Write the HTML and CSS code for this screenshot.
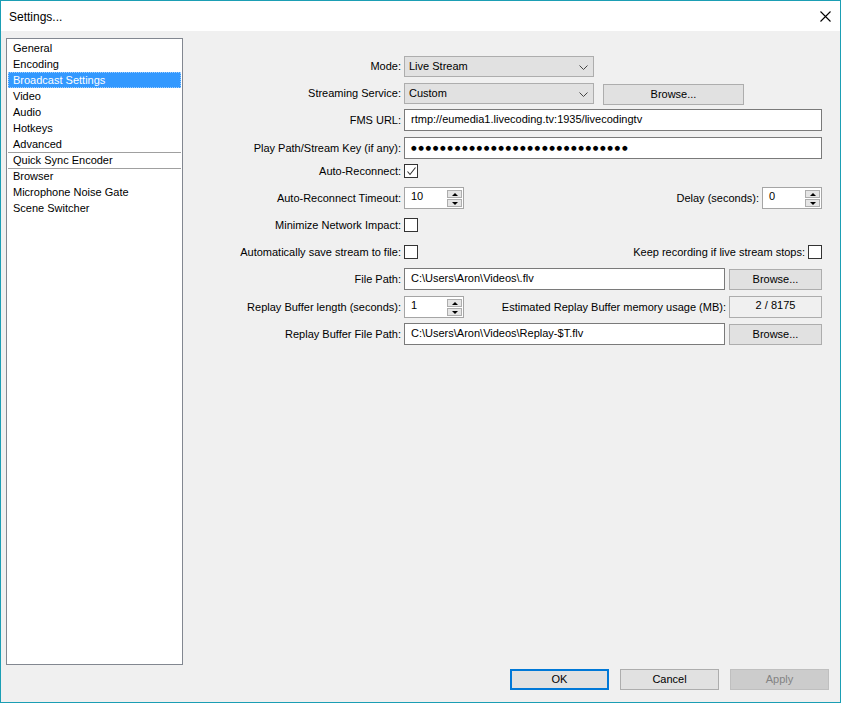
FILE: index.html
```html
<!DOCTYPE html>
<html lang="en">
<head>
  <meta charset="UTF-8">
  <title>Settings...</title>
  <link rel="stylesheet" href="styles.css">
</head>
<body>
  <div class="window">
    <div class="titlebar">
      <span class="title">Settings...</span>
      <span class="close">
        <svg width="11" height="11" viewBox="0 0 11 11"><path d="M0.5 0.5 L10.5 10.5 M10.5 0.5 L0.5 10.5" stroke="#000" stroke-width="1.1" fill="none"/></svg>
      </span>
    </div>

    <div class="main">
      <ul class="nav">
        <li>General</li>
        <li>Encoding</li>
        <li class="selected">Broadcast Settings</li>
        <li>Video</li>
        <li>Audio</li>
        <li>Hotkeys</li>
        <li>Advanced</li>
        <li class="sep">Quick Sync Encoder</li>
        <li class="sep">Browser</li>
        <li>Microphone Noise Gate</li>
        <li>Scene Switcher</li>
      </ul>

      <div class="form">
        <div class="row">
          <label>Mode:</label>
          <div class="combo">Live Stream<svg class="chev" width="9" height="5" viewBox="0 0 9 5"><polyline points="0.5,0.5 4.5,4.5 8.5,0.5" fill="none" stroke="#444" stroke-width="1"/></svg></div>
        </div>
        <div class="row">
          <label>Streaming Service:</label>
          <div class="combo">Custom<svg class="chev" width="9" height="5" viewBox="0 0 9 5"><polyline points="0.5,0.5 4.5,4.5 8.5,0.5" fill="none" stroke="#444" stroke-width="1"/></svg></div>
          <div class="button wide">Browse...</div>
        </div>
        <div class="row">
          <label>FMS URL:</label>
          <div class="field">rtmp://eumedia1.livecoding.tv:1935/livecodingtv</div>
        </div>
        <div class="row row-key">
          <label>Play Path/Stream Key (if any):</label>
          <div class="field dots">●●●●●●●●●●●●●●●●●●●●●●●●●●●●●●</div>
        </div>
        <div class="row row-tight">
          <label>Auto-Reconnect:</label>
          <div class="check checked">
            <svg width="11" height="11" viewBox="0 0 11 11"><polyline points="1.5,5.5 4,8.5 9.5,1.5" fill="none" stroke="#333" stroke-width="1.1"/></svg>
          </div>
        </div>
        <div class="row">
          <label>Auto-Reconnect Timeout:</label>
          <div class="spin"><span class="value">10</span><span class="arrows"><span class="up"></span><span class="down"></span></span></div>
          <span class="spacer"></span>
          <span class="side-label">Delay (seconds):</span>
          <div class="spin"><span class="value">0</span><span class="arrows"><span class="up"></span><span class="down"></span></span></div>
        </div>
        <div class="row">
          <label>Minimize Network Impact:</label>
          <div class="check"></div>
        </div>
        <div class="row">
          <label>Automatically save stream to file:</label>
          <div class="check"></div>
          <span class="spacer"></span>
          <span class="side-label">Keep recording if live stream stops:</span>
          <div class="check"></div>
        </div>
        <div class="row">
          <label>File Path:</label>
          <div class="field">C:\Users\Aron\Videos\.flv</div>
          <div class="button">Browse...</div>
        </div>
        <div class="row row-buffer">
          <label>Replay Buffer length (seconds):</label>
          <div class="spin"><span class="value">1</span><span class="arrows"><span class="up"></span><span class="down"></span></span></div>
          <span class="spacer"></span>
          <span class="side-label">Estimated Replay Buffer memory usage (MB):</span>
          <div class="readout">2 / 8175</div>
        </div>
        <div class="row">
          <label>Replay Buffer File Path:</label>
          <div class="field">C:\Users\Aron\Videos\Replay-$T.flv</div>
          <div class="button">Browse...</div>
        </div>
      </div>
    </div>

    <div class="footer">
      <div class="button action default">OK</div>
      <div class="button action">Cancel</div>
      <div class="button action disabled">Apply</div>
    </div>
  </div>
</body>
</html>
```

FILE: styles.css
```css
body {
  margin: 0;
  background: #f0f0f0;
}

.window {
  width: 841px;
  height: 703px;
  box-sizing: border-box;
  border: 1px solid #1b9eb4;
  background: #f0f0f0;
  display: flex;
  flex-direction: column;
  font-family: "Liberation Sans", Arial, sans-serif;
  font-size: 11px;
  color: #000;
}

.titlebar {
  height: 30px;
  flex: 0 0 30px;
  background: #fff;
  display: flex;
  align-items: center;
  justify-content: space-between;
  padding-left: 8px;
}

.title {
  font-size: 12px;
  padding-top: 2px;
}

.close {
  width: 30px;
  height: 30px;
  display: flex;
  align-items: center;
  justify-content: center;
}

.main {
  flex: 1;
  display: flex;
  padding: 7px 0 0 5px;
}

/* left category list */
.nav {
  list-style: none;
  margin: 0;
  padding: 1px;
  width: 177px;
  height: 627px;
  box-sizing: border-box;
  border: 1px solid #828790;
  background: #fff;
}

.nav li {
  height: 16px;
  line-height: 16px;
  padding-left: 5px;
  box-sizing: border-box;
  white-space: nowrap;
}

.nav li.sep {
  border-top: 1px solid #a0a0a0;
  line-height: 15px;
}

.nav li.selected {
  background: #3399ff;
  color: #fff;
  outline: 1px dotted #9fcfff;
  outline-offset: -1px;
}

/* right form */
.form {
  margin-left: 7px;
  padding-top: 17px;
  width: 632px;
  display: flex;
  flex-direction: column;
  gap: 5px;
}

.row {
  display: flex;
  align-items: center;
  height: 22px;
}

.row-key {
  margin-top: 1px;
}

.row-tight {
  margin-top: -4px;
}

.row-buffer {
  margin-top: 1px;
}

.row label {
  width: 211px;
  flex: 0 0 211px;
  text-align: right;
  margin-right: 3px;
  white-space: nowrap;
}

.spacer {
  flex: 1;
}

.side-label {
  margin-right: 3px;
  white-space: nowrap;
}

.combo {
  position: relative;
  width: 190px;
  height: 21px;
  box-sizing: border-box;
  border: 1px solid #adadad;
  background: #e1e1e1;
  padding-left: 4px;
  line-height: 19px;
}

.chev {
  position: absolute;
  right: 5px;
  top: 8px;
}

.button {
  height: 21px;
  box-sizing: border-box;
  border: 1px solid #adadad;
  background: #e1e1e1;
  text-align: center;
  line-height: 19px;
  width: 93px;
  margin-left: 4px;
}

.button.wide {
  width: 141px;
  margin-left: 9px;
  margin-top: 2px;
}

.field {
  flex: 1;
  height: 22px;
  box-sizing: border-box;
  border: 1px solid #7a7a7a;
  background: #fff;
  padding-left: 6px;
  line-height: 19px;
  white-space: nowrap;
  overflow: hidden;
}

.field.dots {
  font-family: "DejaVu Sans", sans-serif;
  font-size: 6.5px;
  letter-spacing: 1.6px;
  line-height: 20px;
}

.check {
  width: 14px;
  height: 14px;
  box-sizing: border-box;
  border: 1px solid #333;
  background: #fff;
  display: flex;
  align-items: center;
  justify-content: center;
}

.spin {
  width: 60px;
  height: 22px;
  box-sizing: border-box;
  border: 1px solid #a5a5a5;
  background: #fff;
  display: flex;
  justify-content: space-between;
}

.spin .value {
  padding-left: 6px;
  line-height: 16px;
}

.spin .arrows {
  display: flex;
  flex-direction: column;
  gap: 1px;
  padding: 2px 1px 0 0;
}

.spin .up,
.spin .down {
  width: 15px;
  height: 8px;
  box-sizing: border-box;
  border: 1px solid #adadad;
  background: #e5e5e5;
  display: flex;
  align-items: center;
  justify-content: center;
}

.spin .up::after {
  content: "";
  border-left: 3px solid transparent;
  border-right: 3px solid transparent;
  border-bottom: 3px solid #000;
}

.spin .down::after {
  content: "";
  border-left: 3px solid transparent;
  border-right: 3px solid transparent;
  border-top: 3px solid #000;
}

.readout {
  width: 93px;
  height: 22px;
  box-sizing: border-box;
  border: 1px solid #adadad;
  background: #f0f0f0;
  text-align: center;
  line-height: 17px;
}

.footer {
  flex: 0 0 auto;
  display: flex;
  justify-content: flex-end;
  gap: 11px;
  padding: 4px 11px 12px 0;
}

.button.action {
  width: 99px;
  margin-left: 0;
}

.button.default {
  border: 2px solid #0078d7;
  line-height: 17px;
}

.button.disabled {
  background: #cccccc;
  border-color: #bfbfbf;
  color: #838383;
}
```
